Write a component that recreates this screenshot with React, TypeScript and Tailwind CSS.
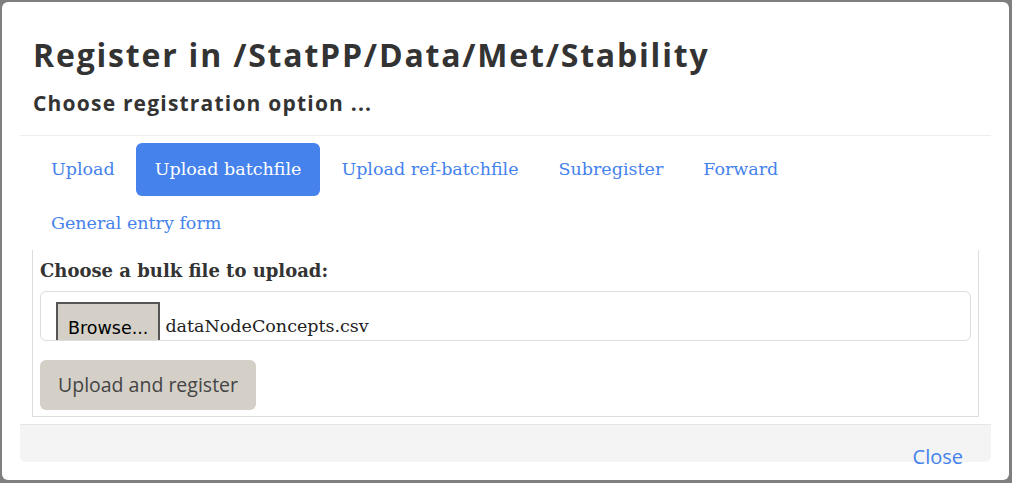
import React from "react";

const tabs = ["Upload", "Upload batchfile", "Upload ref-batchfile", "Subregister", "Forward", "General entry form"];

export default function App() {
  return (
    <div className="h-[483px] w-[1012px] bg-[#7f7f7f] pl-[2px] pt-[2px] pr-[3px] pb-[3px]">
      <div className="flex h-full flex-col rounded-md bg-white">
        <div className="mx-[18px] flex flex-1 flex-col">
          <div className="border-b border-[#eeeeee] px-[13px] pb-[17px] pt-[33px] text-[#333333] [font-family:'Open_Sans','Noto_Sans',sans-serif]">
            <h1 className="text-[32px] font-bold leading-[40px] tracking-[1.8px]">Register in /StatPP/Data/Met/Stability</h1>
            <h2 className="mt-[13px] text-[21px] font-bold leading-[30px] tracking-[1.2px]">Choose registration option ...</h2>
          </div>
          <div className="px-[12px] pt-[7px]">
            <div className="flex flex-wrap gap-x-[2px] gap-y-[1px] [font-family:'DejaVu_Serif',Georgia,serif]">
              {tabs.map((t, i) => (
                <div
                  key={t}
                  className={
                    "flex h-[53px] items-center rounded-md px-[19px] text-[17.5px] " +
                    (i === 1 ? "bg-[#4582ec] text-white" : "text-[#4582ec]")
                  }
                >
                  {t}
                </div>
              ))}
            </div>
            <div className="border-x border-b border-[#dddddd] px-[7px] pb-[6px]">
              <div className="pt-[10px] text-[18px] font-bold leading-[22px] text-[#333333] [font-family:'DejaVu_Serif',Georgia,serif]">
                Choose a bulk file to upload:
              </div>
              <div className="mt-[9px] flex h-[50px] items-start overflow-hidden rounded-md border border-[#dddddd] pl-[15px] pt-[10px]">
                <div className="flex h-[44px] items-start border-l-2 border-t-2 border-r-2 border-[#555555] bg-[#d4d0c8] px-[10px] pt-[14px] text-[17.5px] leading-[20px] text-black [font-family:'DejaVu_Sans',Verdana,sans-serif]">
                  Browse...
                </div>
                <div className="ml-[5px] pt-[14px] text-[17.5px] leading-[20px] text-[#222222] [font-family:'DejaVu_Serif',Georgia,serif]">
                  dataNodeConcepts.csv
                </div>
              </div>
              <div className="mt-[19px] flex h-[50px] w-[216px] items-center justify-center rounded-md bg-[#d4d0c8] text-[19.5px] text-[#444444] [font-family:'Open_Sans','Noto_Sans',sans-serif]">
                Upload and register
              </div>
            </div>
          </div>
          <div className="mt-[7px] flex h-[38px] justify-end rounded-b-md border-t border-[#e5e5e5] bg-[#f4f4f4] pr-[28px]">
            <div className="pt-[14px] text-[20px] leading-[36px] text-[#4582ec] [font-family:'Open_Sans','Noto_Sans',sans-serif]">
              Close
            </div>
          </div>
        </div>
      </div>
    </div>
  );
}
